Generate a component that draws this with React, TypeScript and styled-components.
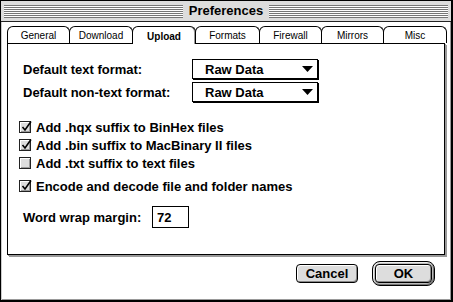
import React from "react";
import styled, { createGlobalStyle } from "styled-components";

const GlobalStyle = createGlobalStyle`
  html, body {
    margin: 0;
    padding: 0;
    background: #fff;
  }
  body {
    font-family: "Liberation Sans", Arial, sans-serif;
    color: #000;
  }
`;

const tabs = ["General", "Download", "Upload", "Formats", "Firewall", "Mirrors", "Misc"];
const activeTab = "Upload";

const Window = styled.div`
  width: 453px;
  height: 302px;
  box-sizing: border-box;
  border-top: 1px solid #000;
  border-left: 1px solid #000;
  border-right: 2px solid #000;
  border-bottom: 2px solid #000;
  box-shadow: inset 1px 1px 0 #ccc, inset -1px -1px 0 #999;
  background: #fff;
  display: flex;
  flex-direction: column;
`;

const TitleBar = styled.div`
  height: 20px;
  background: #ddd;
  border-bottom: 1px solid #222;
  display: flex;
  align-items: center;
  padding: 0 3px;
  gap: 4px;
`;

const Stripes = styled.div`
  flex: 1;
  height: 13px;
  background: repeating-linear-gradient(
    to bottom,
    #777 0px,
    #777 1px,
    #fff 1px,
    #fff 2px
  );
`;

const Title = styled.div`
  font-weight: 700;
  font-size: 13px;
  padding: 0 2px;
  line-height: 20px;
`;

const Body = styled.div`
  flex: 1;
  display: flex;
  flex-direction: column;
  padding: 4px 6px 0 6px;
`;

const TabRow = styled.div`
  display: grid;
  grid-template-columns: 62px 63px 63px 64px 62px 62px 1fr;
  height: 17px;
  margin-right: -1px;
`;

const Tab = styled.div<{ $active?: boolean }>`
  position: relative;
  z-index: ${(p) => (p.$active ? 1 : 0)};
  margin-right: -1px;
  height: ${(p) => (p.$active ? "18px" : "17px")};
  box-sizing: border-box;
  border: 1px solid #000;
  border-bottom: none;
  border-radius: 6px 6px 0 0;
  background: #fff;
  box-shadow: ${(p) => (p.$active ? "inset -1px 0 0 #999" : "none")};
  display: flex;
  align-items: center;
  justify-content: center;
  font-size: 10px;
  font-weight: ${(p) => (p.$active ? 700 : 400)};
  padding-top: 1px;
`;

const Panel = styled.div`
  height: 212px;
  box-sizing: border-box;
  border: 1px solid #000;
  box-shadow: 1px 1px 0 #999, 2px 2px 0 #999;
  background: #fff;
  padding: 15px 0 0 15px;
  display: flex;
  flex-direction: column;
`;

const FormRow = styled.div`
  display: flex;
  align-items: center;
  height: 20px;
  margin-bottom: 3px;
`;

const Label = styled.div<{ $width: number }>`
  width: ${(p) => p.$width}px;
  font-size: 13px;
  font-weight: 700;
  white-space: nowrap;
`;

const Popup = styled.div`
  width: 126px;
  height: 20px;
  box-sizing: border-box;
  border: 1px solid #000;
  box-shadow: 1px 1px 0 #000;
  display: flex;
  align-items: center;
  padding: 0 4px 0 12px;
  font-size: 13px;
  font-weight: 700;
`;

const PopupText = styled.span`
  flex: 1;
`;

const Checks = styled.div`
  margin: 13px 0 0 -4px;
  display: flex;
  flex-direction: column;
`;

const CheckRow = styled.div<{ $gapTop?: number }>`
  display: flex;
  align-items: center;
  height: 18px;
  margin-top: ${(p) => p.$gapTop ?? 0}px;
  gap: 5px;
  font-size: 13px;
  font-weight: 700;
`;

const Box = styled.div`
  width: 12px;
  height: 12px;
  box-sizing: border-box;
  border: 1px solid #222;
  background: #ddd;
  box-shadow: inset 1px 1px 0 #fff, inset -1px -1px 0 #999;
  position: relative;
`;

const Check = styled.svg`
  position: absolute;
  left: 0;
  top: -2px;
  overflow: visible;
`;

const WrapRow = styled.div`
  display: flex;
  align-items: center;
  margin-top: 11px;
`;

const NumberField = styled.div`
  width: 37px;
  height: 22px;
  box-sizing: border-box;
  border: 1px solid #000;
  display: flex;
  align-items: center;
  padding-left: 4px;
  font-size: 13px;
  font-weight: 700;
`;

const ButtonRow = styled.div`
  display: flex;
  justify-content: flex-end;
  align-items: center;
  gap: 14px;
  margin-top: 6px;
  padding-right: 10px;
`;

const Button = styled.div<{ $width: number }>`
  width: ${(p) => p.$width}px;
  height: 19px;
  box-sizing: border-box;
  border: 1px solid #000;
  border-radius: 4px;
  background: #ddd;
  box-shadow: inset 1px 1px 0 #fff, inset -1px -1px 0 #888;
  display: flex;
  align-items: center;
  justify-content: center;
  font-size: 13px;
  font-weight: 700;
`;

const DefaultRing = styled.div`
  border: 1px solid #000;
  border-radius: 8px;
  padding: 2px;
  background: #bbb;
  box-shadow: inset 1px 1px 0 #eee, inset -1px -1px 0 #777;
`;

const CheckBox = ({ checked }: { checked: boolean }) => (
  <Box>
    {checked && (
      <Check width="12" height="12" viewBox="0 0 12 12">
        <path d="M2.5 7 L5 10 L11 1.5" fill="none" stroke="#000" strokeWidth="1.6" />
      </Check>
    )}
  </Box>
);

const Arrow = () => (
  <svg width="11" height="6" viewBox="0 0 11 6">
    <path d="M0 0 H11 L5.5 6 Z" fill="#000" />
  </svg>
);

export default function App() {
  return (
    <>
      <GlobalStyle />
      <Window>
        <TitleBar>
          <Stripes />
          <Title>Preferences</Title>
          <Stripes />
        </TitleBar>
        <Body>
          <TabRow>
            {tabs.map((t) => (
              <Tab key={t} $active={t === activeTab}>
                {t}
              </Tab>
            ))}
          </TabRow>
          <Panel>
            <FormRow>
              <Label $width={169}>Default text format:</Label>
              <Popup>
                <PopupText>Raw Data</PopupText>
                <Arrow />
              </Popup>
            </FormRow>
            <FormRow>
              <Label $width={169}>Default non-text format:</Label>
              <Popup>
                <PopupText>Raw Data</PopupText>
                <Arrow />
              </Popup>
            </FormRow>
            <Checks>
              <CheckRow>
                <CheckBox checked />
                Add .hqx suffix to BinHex files
              </CheckRow>
              <CheckRow>
                <CheckBox checked />
                Add .bin suffix to MacBinary II files
              </CheckRow>
              <CheckRow>
                <CheckBox checked={false} />
                Add .txt suffix to text files
              </CheckRow>
              <CheckRow $gapTop={5}>
                <CheckBox checked />
                Encode and decode file and folder names
              </CheckRow>
            </Checks>
            <WrapRow>
              <Label $width={129}>Word wrap margin:</Label>
              <NumberField>72</NumberField>
            </WrapRow>
          </Panel>
          <ButtonRow>
            <Button $width={62}>Cancel</Button>
            <DefaultRing>
              <Button $width={57}>OK</Button>
            </DefaultRing>
          </ButtonRow>
        </Body>
      </Window>
    </>
  );
}
